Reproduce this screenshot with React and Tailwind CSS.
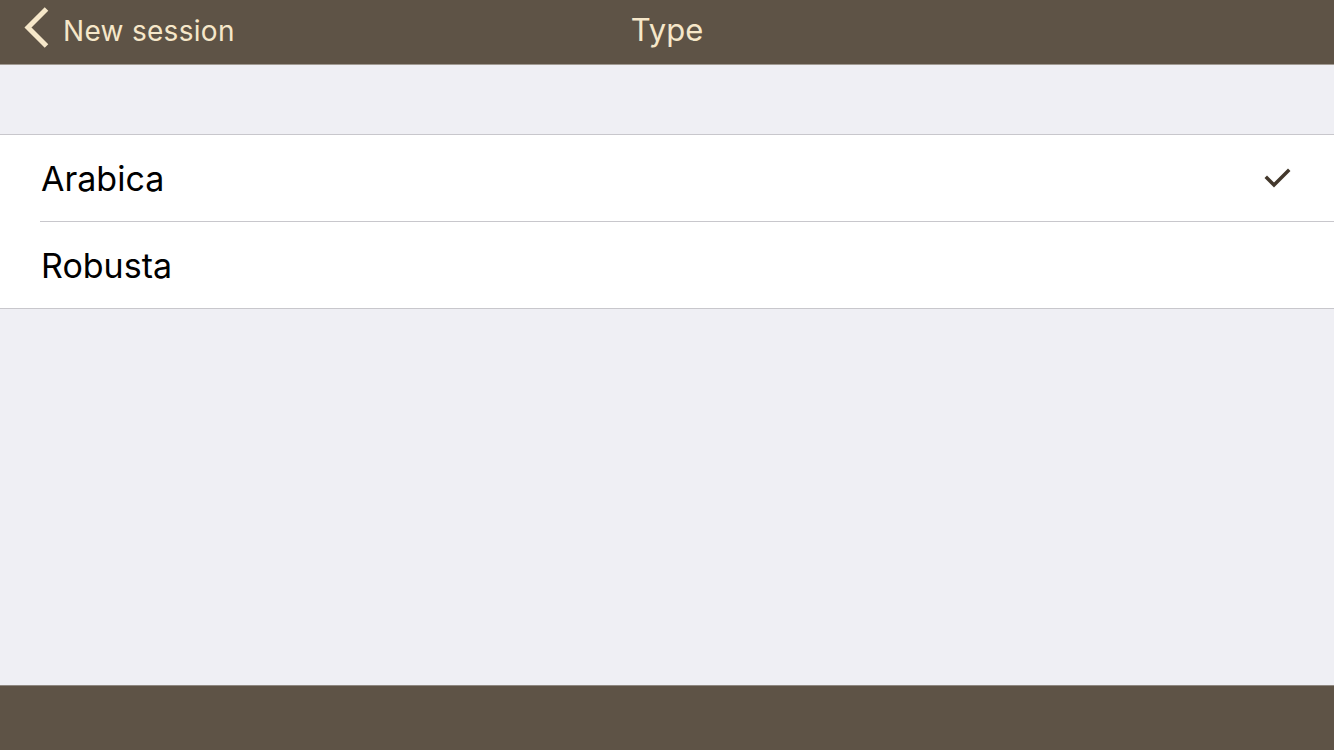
export default function App() {
  return (
    <div className="w-[1334px] h-[750px] flex flex-col bg-[#efeff4] overflow-hidden" style={{ fontFamily: 'Inter, "Liberation Sans", sans-serif' }}>
      <div className="h-[64px] shrink-0 bg-[#5e5346] relative flex items-center justify-center border-b border-[#a19a92] box-content">
        <div className="absolute left-[22px] top-0 h-[64px] flex items-center gap-[12px]">
          <svg width="30" height="46" viewBox="22 5 30 46" className="mt-[-8px]">
            <path d="M46.5 9 L28 27.5 L46.5 46" fill="none" stroke="#f6e7c9" strokeWidth="5" strokeLinecap="butt" strokeLinejoin="miter" />
          </svg>
          <span className="text-[28px] text-[#f6e7c9] tracking-[0.3px] mt-[-2px] ml-[-1px]">New session</span>
        </div>
        <span className="text-[31px] text-[#f6e7c9] mt-[-4px]">Type</span>
      </div>
      <div className="h-[69px] shrink-0" />
      <div className="bg-white border-t border-b border-[#c8c7cc]">
        <div className="flex items-center justify-between h-[86px] pl-[41px] pr-[42px]">
          <span className="text-[34px] text-black">Arabica</span>
          <svg width="28" height="22" viewBox="0 0 28 22">
            <path d="M3 11 L10 18 L24 4" fill="none" stroke="#43382c" strokeWidth="3.5" strokeLinecap="square" />
          </svg>
        </div>
        <div className="ml-[40px] h-px bg-[#c8c7cc]" />
        <div className="flex items-center h-[86px] pl-[41px]">
          <span className="text-[34px] text-black">Robusta</span>
        </div>
      </div>
      <div className="flex-1" />
      <div className="h-[64px] shrink-0 bg-[#5e5346] border-t border-[#8e8780] box-content" />
    </div>
  );
}
